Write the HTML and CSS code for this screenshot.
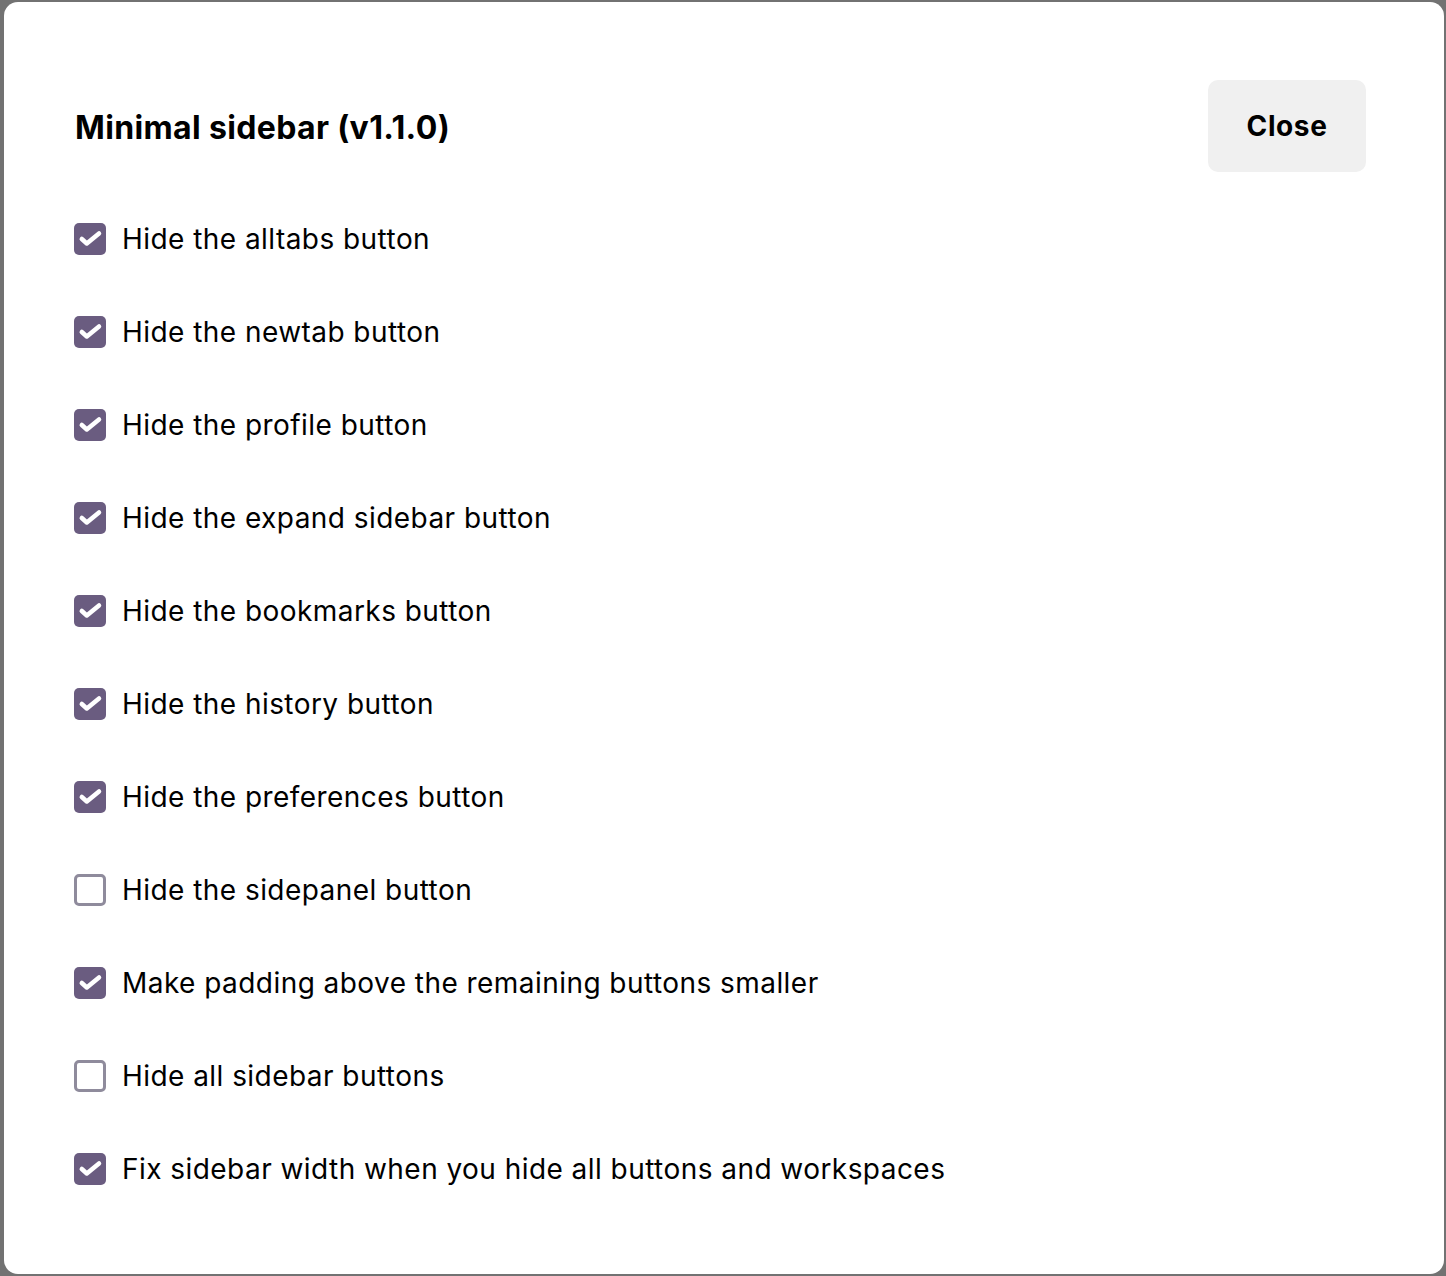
FILE: index.html
```html
<!DOCTYPE html>
<html>
<head>
<meta charset="utf-8">
<link rel="stylesheet" href="styles.css">
</head>
<body>
<div class="modal">
  <div class="header">
    <h1 class="title">Minimal sidebar (v1.1.0)</h1>
    <button class="close">Close</button>
  </div>
  <div class="list">
    <label class="row"><span class="box checked"><svg viewBox="0 0 32 32"><polyline points="7.8,16 12.8,20.5 25,10.5"/></svg></span><span class="label">Hide the alltabs button</span></label>
    <label class="row"><span class="box checked"><svg viewBox="0 0 32 32"><polyline points="7.8,16 12.8,20.5 25,10.5"/></svg></span><span class="label">Hide the newtab button</span></label>
    <label class="row"><span class="box checked"><svg viewBox="0 0 32 32"><polyline points="7.8,16 12.8,20.5 25,10.5"/></svg></span><span class="label">Hide the profile button</span></label>
    <label class="row"><span class="box checked"><svg viewBox="0 0 32 32"><polyline points="7.8,16 12.8,20.5 25,10.5"/></svg></span><span class="label">Hide the expand sidebar button</span></label>
    <label class="row"><span class="box checked"><svg viewBox="0 0 32 32"><polyline points="7.8,16 12.8,20.5 25,10.5"/></svg></span><span class="label">Hide the bookmarks button</span></label>
    <label class="row"><span class="box checked"><svg viewBox="0 0 32 32"><polyline points="7.8,16 12.8,20.5 25,10.5"/></svg></span><span class="label">Hide the history button</span></label>
    <label class="row"><span class="box checked"><svg viewBox="0 0 32 32"><polyline points="7.8,16 12.8,20.5 25,10.5"/></svg></span><span class="label">Hide the preferences button</span></label>
    <label class="row"><span class="box"></span><span class="label">Hide the sidepanel button</span></label>
    <label class="row"><span class="box checked"><svg viewBox="0 0 32 32"><polyline points="7.8,16 12.8,20.5 25,10.5"/></svg></span><span class="label">Make padding above the remaining buttons smaller</span></label>
    <label class="row"><span class="box"></span><span class="label">Hide all sidebar buttons</span></label>
    <label class="row"><span class="box checked"><svg viewBox="0 0 32 32"><polyline points="7.8,16 12.8,20.5 25,10.5"/></svg></span><span class="label">Fix sidebar width when you hide all buttons and workspaces</span></label>
  </div>
</div>
</body>
</html>
```
FILE: styles.css
```css
html, body {
  margin: 0;
  padding: 0;
  background: #727272;
  height: 1276px;
  overflow: hidden;
}
body {
  padding: 2px 2px 2px 4px;
  box-sizing: border-box;
  font-family: Inter, "Liberation Sans", sans-serif;
  color: #000;
}
.modal {
  width: 1440px;
  height: 1272px;
  background: #fff;
  border-radius: 14px;
  box-sizing: border-box;
  padding: 78px 78px 0 71px;
}
.header {
  display: flex;
  justify-content: space-between;
  align-items: center;
  height: 92px;
}
.title {
  margin: 0;
  font-size: 32px;
  font-weight: 700;
  letter-spacing: 0.35px;
  position: relative;
  top: 1px;
}
.close {
  width: 158px;
  height: 92px;
  border: none;
  border-radius: 10px;
  background: #f0f0f0;
  font-family: inherit;
  font-size: 28px;
  font-weight: 700;
  letter-spacing: 0.6px;
  color: #000;
  padding: 0;
}
.list {
  margin-top: 20px;
  display: flex;
  flex-direction: column;
}
.row {
  height: 93px;
  display: flex;
  align-items: center;
  margin-left: -1px;
}
.box {
  width: 32px;
  height: 32px;
  box-sizing: border-box;
  border: 3px solid #8f8b9c;
  border-radius: 5px;
  background: #fff;
  flex: none;
  display: flex;
}
.box.checked {
  border: none;
  background: #6a5c80;
}
.box svg {
  width: 32px;
  height: 32px;
}
.box polyline {
  fill: none;
  stroke: #fff;
  stroke-width: 4.5;
  stroke-linecap: round;
  stroke-linejoin: round;
}
.label {
  margin-left: 16px;
  font-size: 28px;
  font-weight: 400;
  letter-spacing: 0.45px;
}
```
